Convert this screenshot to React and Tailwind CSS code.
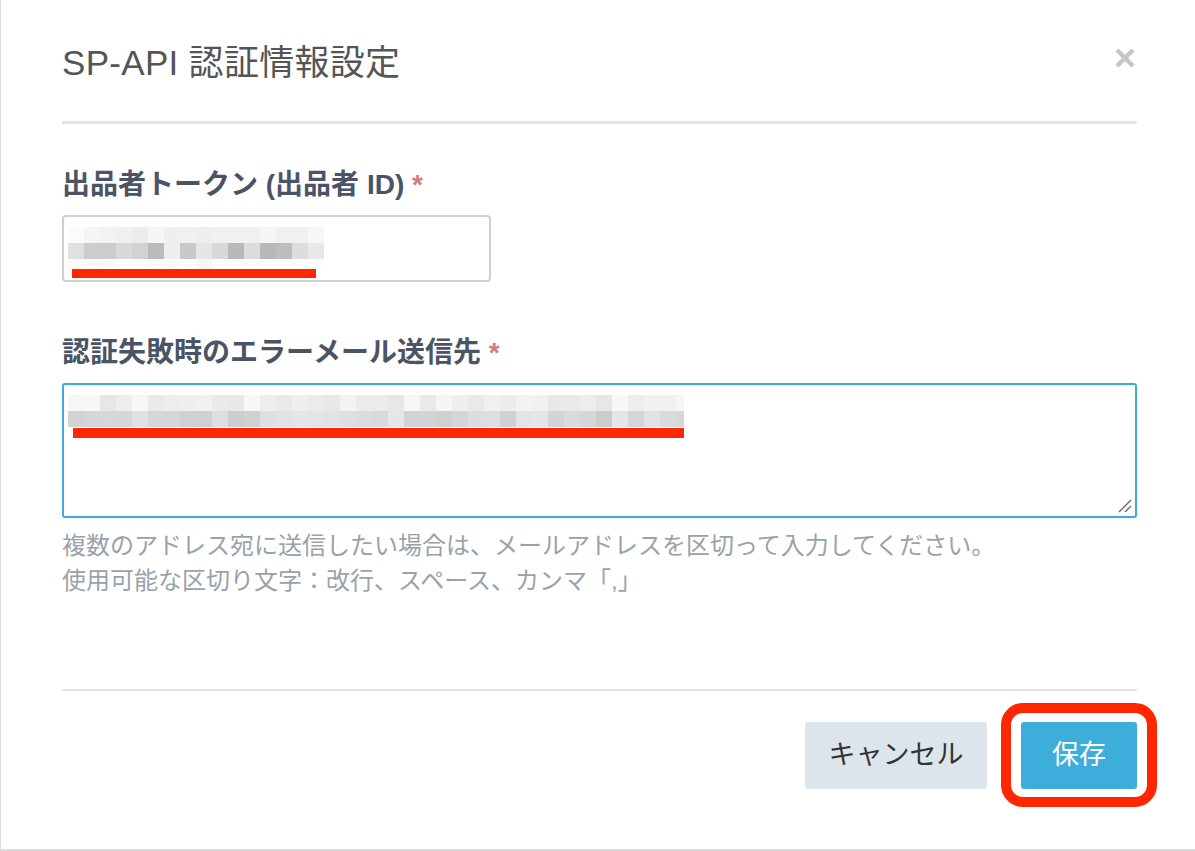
import React from "react";

function seeded(seed) {
  let s = seed;
  return () => {
    s = (s * 9301 + 49297) % 233280;
    return s / 233280;
  };
}

const hex = (v) => {
  const h = Math.round(v).toString(16).padStart(2, "0");
  return `#${h}${h}${h}`;
};

const input1Rows = [
  [0xfb, 0xf5, 0xf2, 0xf0, 0xec, 0xf5, 0xef, 0xf0, 0xee, 0xf0, 0xf0, 0xf0, 0xf5, 0xf0, 0xf0, 0xf7],
  [0xe0, 0xcc, 0xcc, 0xd8, 0xd2, 0xbb, 0xee, 0xc8, 0xe6, 0xd8, 0xb9, 0xdc, 0xb8, 0xbd, 0xdd, 0xe8],
  [0xfa, 0xfb, 0xfc, 0xfd, 0xfd, 0xfb, 0xfa, 0xff, 0xf7, 0xfd, 0xfd, 0xfd, 0xfd, 0xfe, 0xfe, 0xfd],
];

const rnd = seeded(17);
const areaRows = [
  Array.from({ length: 39 }, () => 0xe6 + rnd() * 0x12),
  Array.from({ length: 39 }, () => 0xcb + rnd() * 0x1c),
];

function PixelRow({ values, h }) {
  return (
    <div className="flex">
      {values.map((v, i) => (
        <div key={i} className="w-[16px] shrink-0" style={{ height: h, backgroundColor: hex(v) }} />
      ))}
    </div>
  );
}

export default function App() {
  return (
    <div
      className="w-[1195px] h-[851px] bg-white border-l border-b-2 border-[#dcdcdc] overflow-hidden"
      style={{ fontFamily: '"Liberation Sans", "Noto Sans CJK JP", sans-serif' }}
    >
      <div className="pl-[61px] pr-[58px]">
        {/* Header */}
        <div className="h-[121px] pt-[43px] flex items-start justify-between">
          <h1 className="text-[35px] leading-[40px] text-[#555555] font-normal tracking-[0.3px]">
            SP-API 認証情報設定
          </h1>
          <svg width="22" height="22" viewBox="0 0 22 22" className="mt-[4px] mr-[1px]">
            <path d="M3 3 L19 19 M19 3 L3 19" stroke="#c6c6c6" strokeWidth="4.5" strokeLinecap="butt" />
          </svg>
        </div>
        <div className="h-[3px] bg-[#e4e4e4]" />

        {/* Body */}
        <div className="pt-[45px]">
          <label className="block text-[28px] leading-[32px] font-bold text-[#4a5466]">
            出品者トークン (出品者 ID) <span className="text-[#d37b7b]">*</span>
          </label>
          <div className="mt-[14px] w-[429px] h-[67px] border-2 border-[#cfcfcf] rounded-[4px] pt-[10px] pl-[4px] overflow-hidden">
            <PixelRow values={input1Rows[0]} h={16} />
            <PixelRow values={input1Rows[1]} h={16} />
            <PixelRow values={input1Rows[2]} h={10} />
            <div className="ml-[4px] w-[244px] h-[10px] bg-[#ff2600] -mt-[1px]" />
          </div>

          <label className="block mt-[55px] text-[28px] leading-[32px] font-bold text-[#4a5466]">
            認証失敗時のエラーメール送信先 <span className="text-[#d37b7b]">*</span>
          </label>
          <div className="relative mt-[14px] h-[135px] border-2 border-[#3aacd9] rounded-[3px] pt-[10px] pl-[4px]">
            <div className="w-[616px] overflow-hidden">
              <PixelRow values={areaRows[0]} h={16} />
              <PixelRow values={areaRows[1]} h={16} />
            </div>
            <div className="ml-[5px] mt-[1px] w-[611px] h-[10px] bg-[#ff2600]" />
            <svg width="14" height="14" viewBox="0 0 14 14" className="absolute right-[3px] bottom-[3px]">
              <path d="M1 13 L13 1 M7 13 L13 7" stroke="#6b6b6b" strokeWidth="1.4" />
            </svg>
          </div>

          <div className="mt-[10px] text-[24px] leading-[35px] text-[#98a2ab]">
            <p>複数のアドレス宛に送信したい場合は、メールアドレスを区切って入力してください。</p>
            <p>使用可能な区切り文字：改行、スペース、カンマ「,」</p>
          </div>
        </div>

        {/* Footer */}
        <div className="mt-[91px] h-[2px] bg-[#e4e4e4]" />
        <div className="mt-[31px] flex justify-end gap-[34px]">
          <button className="w-[182px] h-[67px] rounded-[3px] bg-[#dce5eb] text-[#333333] text-[27px]">
            キャンセル
          </button>
          <div className="relative">
            <button className="w-[116px] h-[67px] rounded-[3px] bg-[#3daedb] text-white text-[27px]">
              保存
            </button>
            <div className="absolute left-[-20px] top-[-19px] right-[-20px] bottom-[-18px] border-[10px] border-[#ff2600] rounded-[22px] pointer-events-none" />
          </div>
        </div>
      </div>
    </div>
  );
}
